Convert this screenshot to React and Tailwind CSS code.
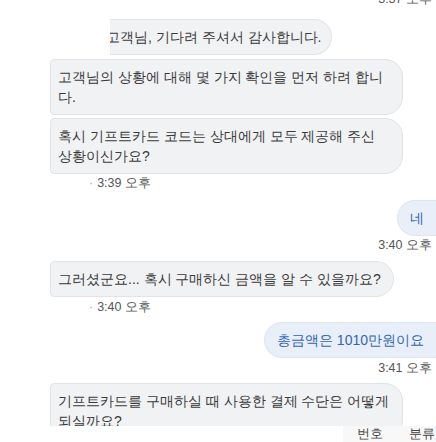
const font = { fontFamily: '"Liberation Sans", sans-serif' };

const AgentBubble = ({ children, className = "" }) => (
  <div
    className={`ml-[50px] whitespace-nowrap rounded-l-[4px] rounded-r-[18px] border border-[#e1e3e7] bg-[#f1f2f4] pl-[7px] pr-[12px] py-[7px] text-[14px] leading-5 text-[#3a3a3a] ${className}`}
  >
    {children}
  </div>
);

const UserBubble = ({ children, className = "" }) => (
  <div className="flex justify-end">
    <div
      className={`whitespace-nowrap rounded-l-[18px] border border-r-0 border-[#dfe6f1] bg-[#e8eff9] pl-[12px] pr-[12px] py-[7px] text-[14px] leading-5 text-[#3366b2] ${className}`}
    >
      {children}
    </div>
  </div>
);

const AgentTime = ({ time, className = "" }) => (
  <div className={`ml-[89px] flex items-center gap-[4px] text-[12.5px] leading-4 text-[#555] ${className}`}>
    <span className="text-[#aaa]">·</span>
    <span>{time}</span>
  </div>
);

const UserTime = ({ time, className = "" }) => (
  <div className={`flex justify-end pr-[4px] text-[12.5px] leading-4 text-[#555] ${className}`}>
    {time}
  </div>
);

export default function App() {
  return (
    <div
      className="relative flex h-[442px] w-[436px] flex-col overflow-hidden bg-white"
      style={font}
    >
      <div className="-mt-[7px] flex justify-end pr-[4px] text-[12.5px] leading-3 text-[#555]">
        3:37 오후
      </div>

      <div className="mt-[14px] flex">
        <div className="ml-[110px] w-[222px] overflow-hidden rounded-r-[18px] border border-l-0 border-[#e1e3e7] bg-[#f1f2f4] py-[7px] text-[14px] leading-5 text-[#3a3a3a] whitespace-nowrap">
          <span className="-ml-[4px] block">고객님, 기다려 주셔서 감사합니다.</span>
        </div>
      </div>

      <AgentBubble className="mt-[4px] w-[353px]">
        고객님의 상황에 대해 몇 가지 확인을 먼저 하려 합니
        <br />
        다.
      </AgentBubble>

      <AgentBubble className="mt-[3px] w-[353px]">
        혹시 기프트카드 코드는 상대에게 모두 제공해 주신
        <br />
        상황이신가요?
      </AgentBubble>

      <AgentTime time="3:39 오후" className="mt-[1px]" />

      <UserBubble className="mt-[9px]">네</UserBubble>

      <UserTime time="3:40 오후" className="mt-[1px]" />

      <div className="mt-[8px] flex">
        <AgentBubble>그러셨군요... 혹시 구매하신 금액을 알 수 있을까요?</AgentBubble>
      </div>

      <AgentTime time="3:40 오후" className="mt-[2px]" />

      <UserBubble className="mt-[7px]">총금액은 1010만원이요</UserBubble>

      <UserTime time="3:41 오후" className="mt-[2px]" />

      <AgentBubble className="mt-[7px] w-[353px]">
        기프트카드를 구매하실 때 사용한 결제 수단은 어떻게
        <br />
        되실까요?
      </AgentBubble>

      <div className="absolute bottom-0 left-0 flex h-[16px] w-full">
        <div className="w-[343px] bg-white" />
        <div className="flex flex-1 items-center bg-[#f8f8f8] text-[12.5px] leading-4 text-[#444]">
          <span className="ml-[14px]">번호</span>
          <span className="ml-[26px] whitespace-nowrap">분류</span>
        </div>
      </div>
    </div>
  );
}
